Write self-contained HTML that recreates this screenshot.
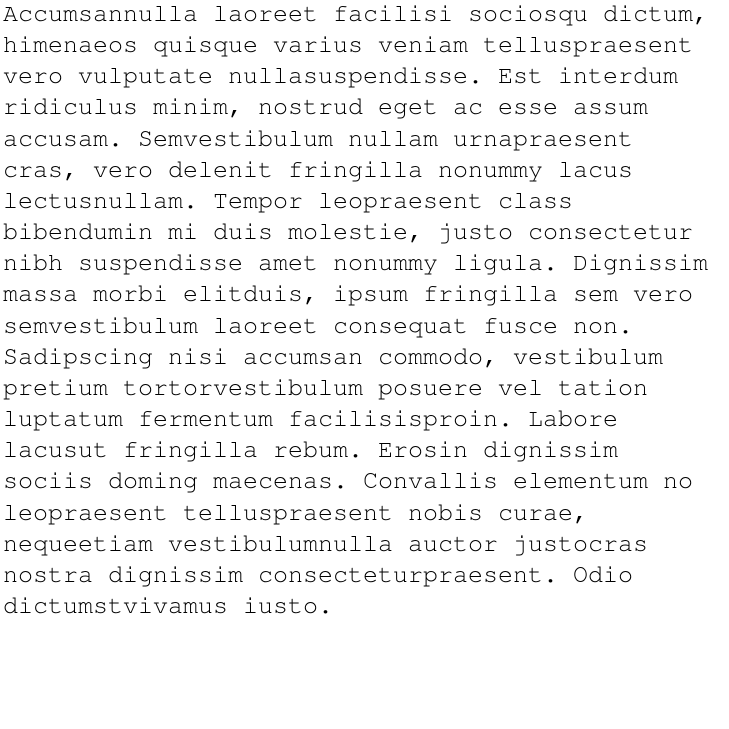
<!DOCTYPE html>
<html><head><meta charset="utf-8"><style>
html,body{margin:0;padding:0;background:#fff;}
pre{margin:0;padding:0 0 0 3px;position:relative;top:-2px;font-family:"Nimbus Mono PS","Nimbus Mono L","FreeMono","Courier 10 Pitch",Courier,"Courier New","Liberation Mono",monospace;font-size:25px;line-height:31.15px;color:#000;}
</style></head><body><pre>Accumsannulla laoreet facilisi sociosqu dictum,
himenaeos quisque varius veniam telluspraesent
vero vulputate nullasuspendisse. Est interdum
ridiculus minim, nostrud eget ac esse assum
accusam. Semvestibulum nullam urnapraesent
cras, vero delenit fringilla nonummy lacus
lectusnullam. Tempor leopraesent class
bibendumin mi duis molestie, justo consectetur
nibh suspendisse amet nonummy ligula. Dignissim
massa morbi elitduis, ipsum fringilla sem vero
semvestibulum laoreet consequat fusce non.
Sadipscing nisi accumsan commodo, vestibulum
pretium tortorvestibulum posuere vel tation
luptatum fermentum facilisisproin. Labore
lacusut fringilla rebum. Erosin dignissim
sociis doming maecenas. Convallis elementum no
leopraesent telluspraesent nobis curae,
nequeetiam vestibulumnulla auctor justocras
nostra dignissim consecteturpraesent. Odio
dictumstvivamus iusto.</pre></body></html>
